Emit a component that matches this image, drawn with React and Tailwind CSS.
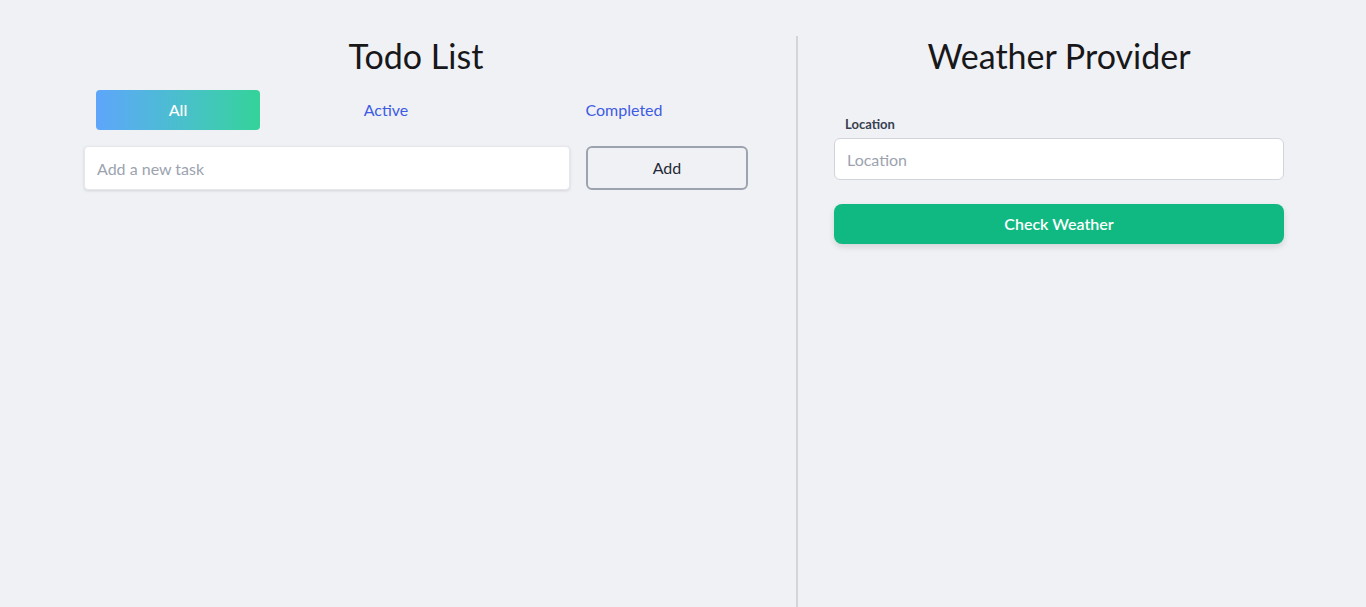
import React, { useState } from "react";

const tabs = [
    { key: "all", label: "All", width: "w-[164px] ml-3" },
    { key: "active", label: "Active", width: "w-[252px]" },
    { key: "completed", label: "Completed", width: "w-[224px]" },
];

const TodoPanel = () => {
    const [filter, setFilter] = useState("all");
    const [task, setTask] = useState("");

    return (
        <section className="w-[798px] shrink-0 mt-9 border-r-2 border-[#d4d5d9] pl-[84px] pr-[48px]">
            <h1 className="text-center text-[34px] leading-10 text-[#18181b]">Todo List</h1>

            <div className="flex mt-[14px] h-10">
                {tabs.map((t) =>
                    filter === t.key ? (
                        <button
                            key={t.key}
                            onClick={() => setFilter(t.key)}
                            className={`${t.width} h-10 rounded bg-gradient-to-r from-[#5ea5fb] to-[#34d399] text-white text-base font-medium`}
                        >
                            {t.label}
                        </button>
                    ) : (
                        <button
                            key={t.key}
                            onClick={() => setFilter(t.key)}
                            className={`${t.width} h-10 text-base text-[#3d5ce3]`}
                        >
                            {t.label}
                        </button>
                    )
                )}
            </div>

            <div className="flex gap-4 mt-4">
                <input
                    type="text"
                    value={task}
                    onChange={(e) => setTask(e.target.value)}
                    placeholder="Add a new task"
                    className="w-[486px] h-11 bg-white rounded border border-[#e5e7eb] shadow-[0_1px_3px_rgba(0,0,0,0.12)] px-3 text-base text-gray-800 placeholder:text-[#9ca3af] focus:outline-none"
                />
                <button className="w-[162px] h-11 rounded-md border-2 border-[#9ca3af] text-base text-[#1f2937]">
                    Add
                </button>
            </div>
        </section>
    );
};

const WeatherPanel = () => {
    const [location, setLocation] = useState("");

    return (
        <section className="flex-1 mt-9 pl-9">
            <div className="w-[450px]">
                <h1 className="text-center text-[34px] leading-10 text-[#18181b]">Weather Provider</h1>

                <label className="block mt-[38px] ml-[11px] text-[13px] leading-5 font-bold text-[#374151]">
                    Location
                </label>
                <input
                    type="text"
                    value={location}
                    onChange={(e) => setLocation(e.target.value)}
                    placeholder="Location"
                    className="mt-1 w-full h-[42px] bg-white rounded-md border border-[#d1d5db] px-3 text-base text-gray-800 placeholder:text-[#9ca3af] focus:outline-none"
                />

                <button className="mt-6 w-full h-10 rounded-lg bg-[#10b981] text-white text-base font-semibold shadow-[0_3px_6px_rgba(0,0,0,0.12)]">
                    Check Weather
                </button>
            </div>
        </section>
    );
};

export default function App() {
    return (
        <div className="h-screen overflow-y-scroll bg-[#f0f1f5] font-['Lato',sans-serif] [&::-webkit-scrollbar]:w-[10px] [&::-webkit-scrollbar-track]:bg-[#f1f1f3] [&::-webkit-scrollbar-thumb]:bg-[#1e1e2c] [&::-webkit-scrollbar-thumb]:border-solid [&::-webkit-scrollbar-thumb]:border-y-[3px] [&::-webkit-scrollbar-thumb]:border-l-2 [&::-webkit-scrollbar-thumb]:border-r-[3px] [&::-webkit-scrollbar-thumb]:border-[#f1f1f3]">
            <div className="flex min-h-[661px]">
                <TodoPanel />
                <WeatherPanel />
            </div>
        </div>
    );
}
